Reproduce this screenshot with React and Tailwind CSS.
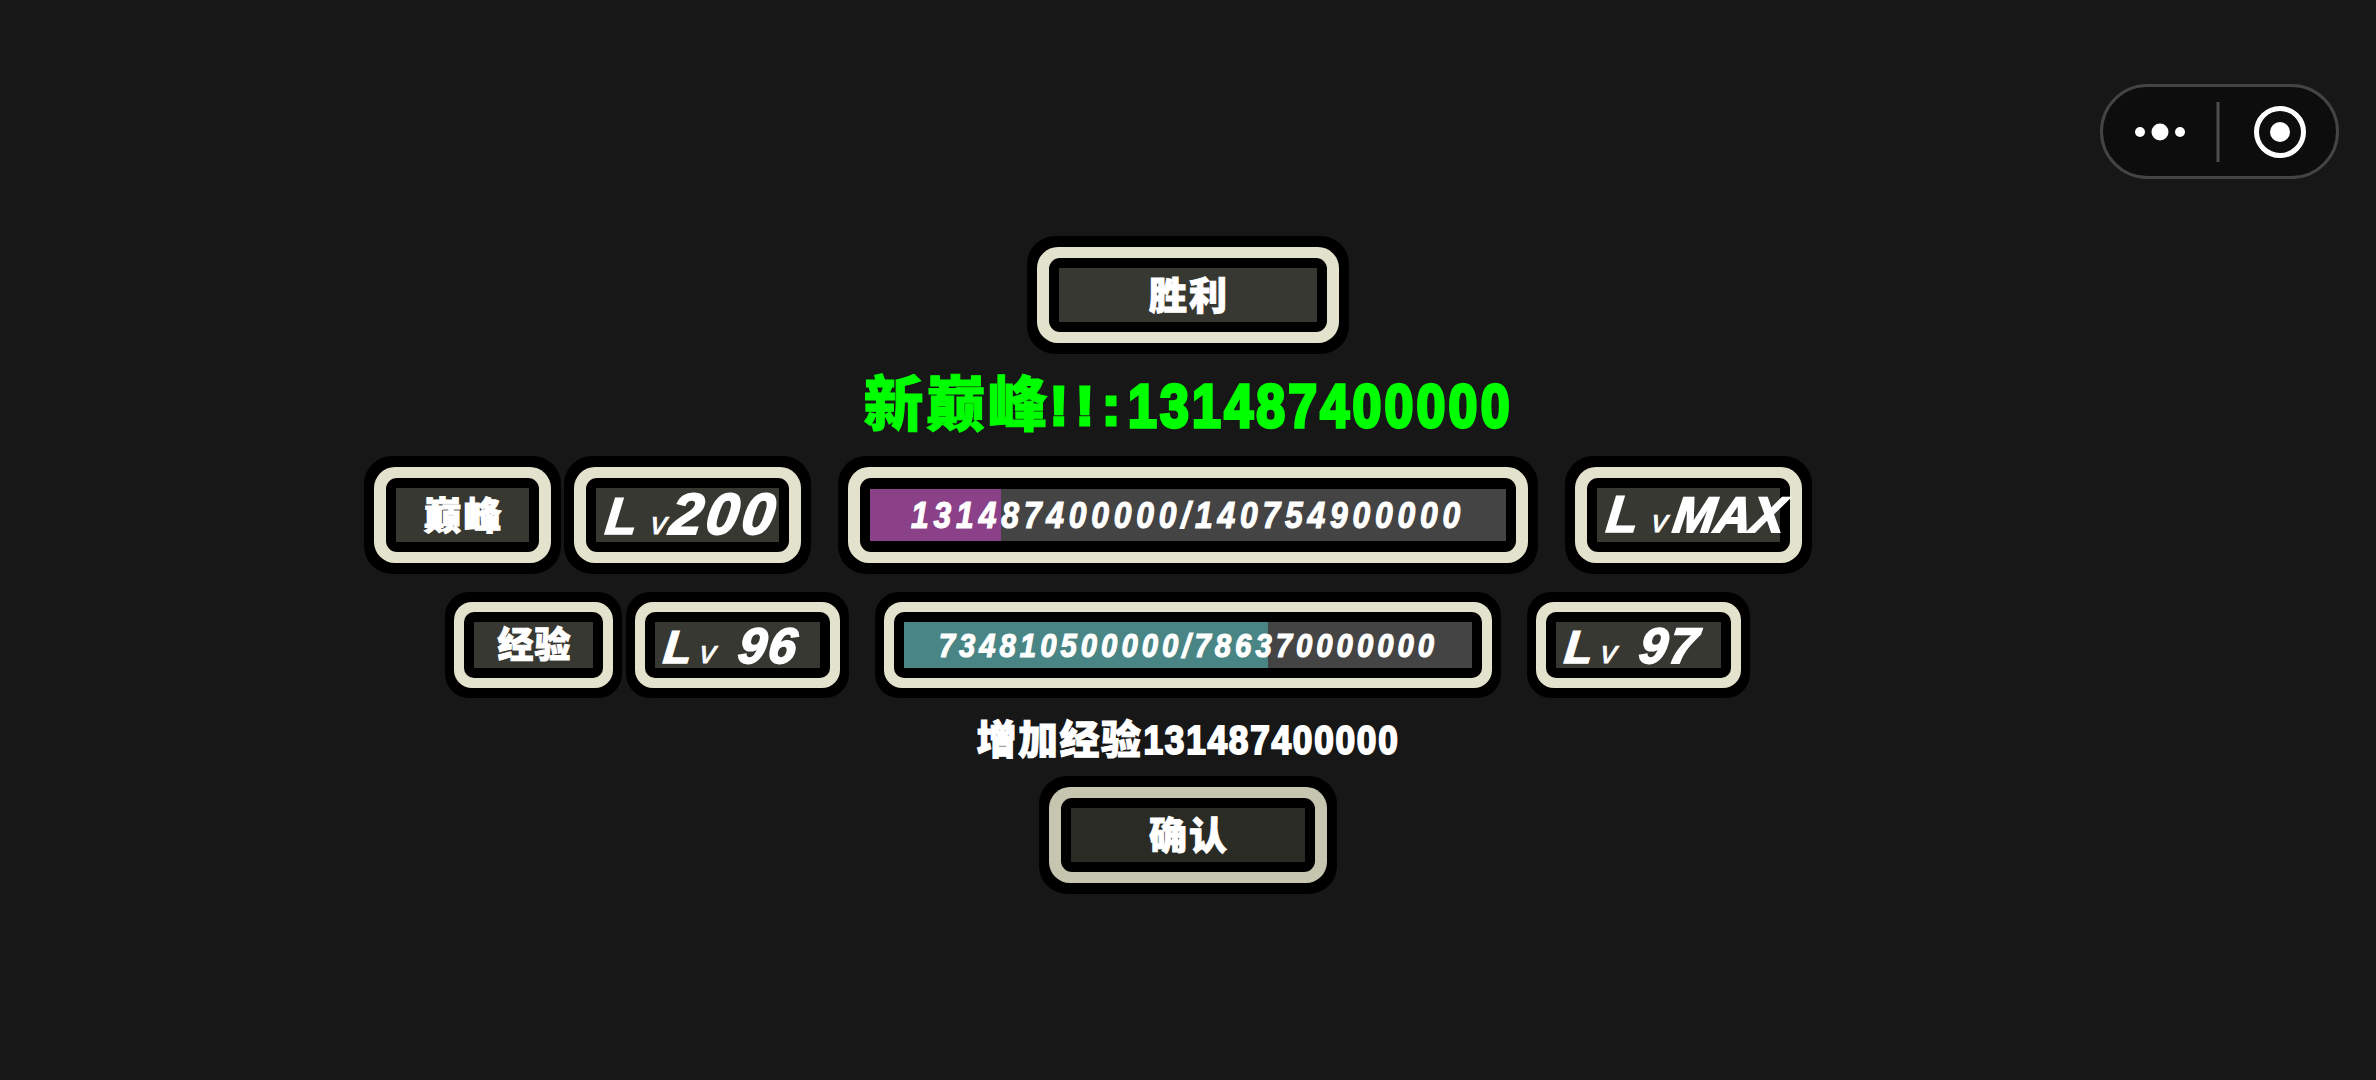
const CJK = "font-['Liberation_Sans','Noto_Sans_CJK_SC',sans-serif] font-black";

function Frame({ small, dim, box, children }) {
  const outer = small ? "rounded-[24px] px-[9px] py-[10px]" : "rounded-[28px] px-[10px] py-[11px]";
  const cream = small ? "rounded-[18px] px-[10px] py-[10px]" : "rounded-[21px] px-[12px] py-[11px]";
  const inner = small ? "rounded-[10px] p-[10px]" : "rounded-[11px] p-[10px]";
  return (
    <div className={`bg-black ${outer}`}>
      <div className={`${dim ? "bg-[#c6c5b0]" : "bg-[#e3e2cd]"} ${cream}`}>
        <div className={`bg-black ${inner}`}>
          <div className={`relative flex items-center justify-center ${box}`}>{children}</div>
        </div>
      </div>
    </div>
  );
}

function Label({ children, small }) {
  return (
    <span className={`${CJK} translate-x-[1px] translate-y-[1px] text-white [-webkit-text-stroke:1px_white] ${small ? "text-[36px] tracking-[1px]" : "text-[38px] tracking-[2px]"} leading-none`}>
      {children}
    </span>
  );
}

function Level({ value, small, spaced }) {
  const l = small ? "text-[46px]" : "text-[52px]";
  const v = small ? "text-[32px] ml-[8px]" : "text-[32px] ml-[13px]";
  const n = small ? "text-[50px] tracking-[2px] ml-[23px]" : spaced ? "text-[50px] tracking-[0px] ml-[6px]" : "text-[58px] tracking-[3.5px] ml-[4px]";
  const shift = small ? "-translate-y-[1px] pl-[9px]" : spaced ? "pl-[10px]" : "-translate-y-[3px] pl-[10px]";
  return (
    <div className={`flex h-full w-full items-baseline whitespace-nowrap font-['Liberation_Sans',sans-serif] font-bold italic leading-none text-white ${shift}`}>
      <span className={`${l} skew-x-[-6deg] [-webkit-text-stroke:1.5px_white]`}>L</span>
      <span className={`${v} skew-x-[-6deg] font-normal [-webkit-text-stroke:0.8px_white]`}>v</span>
      <span className={`${n} skew-x-[-8deg] [-webkit-text-stroke:1.8px_white]`}>{value}</span>
    </div>
  );
}

function Bar({ fill, width, text, textClass }) {
  return (
    <>
      <div className={`absolute inset-y-0 left-0 ${fill} ${width}`} />
      <span className={`relative shrink-0 scale-x-[0.86] whitespace-nowrap font-['Liberation_Sans',sans-serif] font-bold italic leading-none text-white [-webkit-text-stroke:1.2px_white] ${textClass}`}>
        {text}
      </span>
    </>
  );
}

function Capsule() {
  return (
    <div className="absolute left-[2100px] top-[84px] flex h-[95px] w-[239px] items-center rounded-full border-[3px] border-[#444444] bg-[#0d0d0d]">
      <svg width="233" height="89" viewBox="0 0 233 89" fill="none">
        <circle cx="37" cy="45" r="5" fill="#fff" />
        <circle cx="57" cy="45" r="8.5" fill="#fff" />
        <circle cx="77" cy="45" r="5" fill="#fff" />
        <rect x="113.5" y="15" width="3" height="60" fill="#4d4d4d" />
        <circle cx="177" cy="45" r="23.5" stroke="#fff" strokeWidth="5" />
        <circle cx="177" cy="45" r="10" fill="#fff" />
      </svg>
    </div>
  );
}

export default function App() {
  return (
    <div className="relative flex min-h-[1080px] flex-col items-center overflow-hidden bg-[#171717] pt-[236px]">
      <Capsule />
      <Frame box="h-[54px] w-[258px] bg-[#383832]"><Label>胜利</Label></Frame>

      <div className="flex h-[102px] items-center pt-[2px] text-[#00ff00] font-['Liberation_Sans','Noto_Sans_CJK_SC',sans-serif] font-bold leading-none whitespace-nowrap">
        <span className="font-black text-[60px] tracking-[2px] [-webkit-text-stroke:1px_#00ff00]">新巅峰</span>
        <span className="text-[56px] tracking-[7.5px] [-webkit-text-stroke:3px_#00ff00]">!!:</span>
        <span className="mx-[-34px] inline-block scale-x-[0.85] text-[61px] tracking-[3.8px] [-webkit-text-stroke:3.5px_#00ff00]">131487400000</span>
      </div>

      <div className="grid w-full grid-cols-[1fr_auto_1fr] gap-x-[27px]">
        <div className="flex justify-end gap-[3px]">
          <Frame box="h-[54px] w-[133px] bg-[#383832]"><Label>巅峰</Label></Frame>
          <Frame box="h-[54px] w-[183px] bg-[#383832]"><Level value="200" /></Frame>
        </div>
        <Frame box="my-[1px] h-[52px] w-[636px] bg-[#444444]">
          <Bar fill="bg-[#8a4188]" width="w-[20.6%]" text="131487400000/140754900000" textClass="text-[37px] tracking-[5.6px]" />
        </Frame>
        <div className="flex justify-start">
          <Frame box="h-[54px] w-[183px] bg-[#383832]"><Level value="MAX" spaced /></Frame>
        </div>
      </div>

      <div className="mt-[18px] grid w-full grid-cols-[1fr_auto_1fr] gap-x-[26px]">
        <div className="flex justify-end gap-[4px]">
          <Frame small box="h-[46px] w-[119px] bg-[#383832]"><Label small>经验</Label></Frame>
          <Frame small box="h-[46px] w-[165px] bg-[#383832]"><Level small value="96" /></Frame>
        </div>
        <Frame small box="h-[46px] w-[568px] bg-[#444444]">
          <Bar fill="bg-[#4a8585]" width="w-[64%]" text="734810500000/786370000000" textClass="text-[34px] tracking-[4.7px]" />
        </Frame>
        <div className="flex justify-start">
          <Frame small box="h-[46px] w-[165px] bg-[#383832]"><Level small value="97" /></Frame>
        </div>
      </div>

      <div className="flex h-[78px] items-center pt-[6px] font-['Liberation_Sans','Noto_Sans_CJK_SC',sans-serif] font-bold leading-none text-white whitespace-nowrap">
        <span className="font-black text-[40px] tracking-[1.5px] [-webkit-text-stroke:1px_white]">增加经验</span>
        <span className="mx-[-17px] inline-block scale-x-[0.88] text-[40px] tracking-[2px] [-webkit-text-stroke:2px_white]">131487400000</span>
      </div>

      <Frame dim box="h-[54px] w-[234px] bg-[#2b2b25]"><Label>确认</Label></Frame>
    </div>
  );
}
